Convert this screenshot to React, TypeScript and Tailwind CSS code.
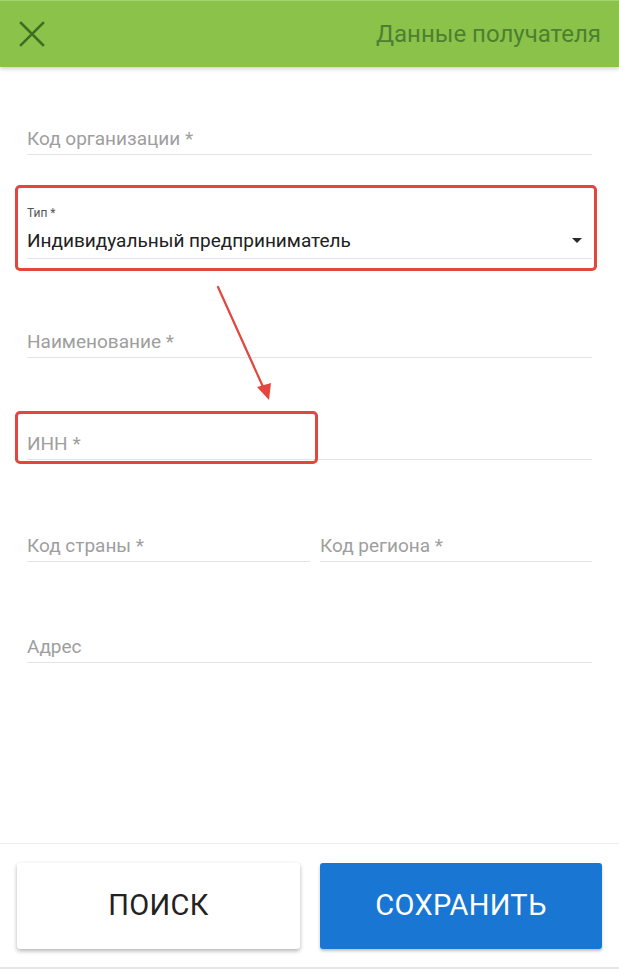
import type { ReactNode } from 'react'

const font = { fontFamily: 'Roboto, "Noto Sans", Arial, sans-serif' }

const Field = ({ label, className = '', children }: { label: string; className?: string; children?: ReactNode }) => (
  <div className={`relative ${className}`}>
    <div className="border-b border-[#e4e4e4] pb-[5px] text-[19px] leading-[21px] text-[#9e9e9e]">{label}</div>
    {children}
  </div>
)

const RedBox = ({ className }: { className: string }) => (
  <div className={`absolute pointer-events-none rounded-[5px] border-[3px] border-[#e2463d] ${className}`} />
)

export default function App() {
  return (
    <div className="w-[619px] h-[969px] bg-white flex flex-col overflow-hidden" style={font}>
      {/* Header */}
      <div className="h-[67px] shrink-0 bg-[#8bc34a] border-t border-[#a5d36f] flex items-center justify-between pl-[19px] pr-[18px] shadow-[0_2px_4px_rgba(0,0,0,0.18)] z-10">
        <svg viewBox="0 0 26 26" className="w-[26px] h-[26px]" fill="none" stroke="#3f6d22" strokeWidth="2.6" strokeLinecap="square">
          <path d="M2 2 L24 24 M24 2 L2 24" />
        </svg>
        <span className="text-[24px] text-[#4d7f30]">Данные получателя</span>
      </div>

      {/* Form */}
      <div className="relative flex-1 px-[27px]">
        <Field label="Код организации *" className="mt-[61px]" />

        <div className="relative mt-[51px]">
          <div className="text-[12px] leading-[14px] text-[#555]">Тип *</div>
          <div className="flex items-center justify-between border-b border-[#e4e4e4] mt-[10px] pb-[7px]">
            <span className="text-[19px] leading-[21px] text-[#212121]">Индивидуальный предприниматель</span>
            <svg viewBox="0 0 10 5" className="w-[10px] h-[5px] mr-[10px]">
              <path d="M0 0 H10 L5 5 Z" fill="#2a2a2a" />
            </svg>
          </div>
          <RedBox className="-left-[12px] -top-[21px] -right-[5px] -bottom-[12px]" />
        </div>

        <Field label="Наименование *" className="mt-[72px]" />

        <Field label="ИНН *" className="mt-[75px]">
          <RedBox className="-left-[12px] -top-[22px] w-[303px] -bottom-[4px]" />
        </Field>

        <div className="flex mt-[75px]">
          <Field label="Код страны *" className="w-[283px]" />
          <Field label="Код региона *" className="flex-1 ml-[8px] pl-[2px]" />
        </div>

        <Field label="Адрес" className="mt-[74px]" />

        {/* Annotation arrow */}
        <svg className="absolute left-[208px] top-[216px] w-[70px] h-[120px] pointer-events-none" viewBox="0 0 70 120">
          <path d="M10 4 L56 106" stroke="#e2463d" strokeWidth="2.2" strokeLinecap="round" />
          <path d="M61 117 L49 104 L63 100 Z" fill="#e2463d" />
        </svg>
      </div>

      {/* Footer */}
      <div className="h-[126px] shrink-0 border-t border-[#ececec] border-b-2 border-b-[#e6e6e6] flex gap-[20px] px-[17px] pt-[19px] pb-[18px]">
        <button className="w-[283px] h-[86px] bg-white rounded-[3px] shadow-[0_2px_4px_rgba(0,0,0,0.3)] text-[29px] text-[#222] tracking-[0.3px]">
          ПОИСК
        </button>
        <button className="flex-1 h-[86px] bg-[#1976d2] rounded-[3px] shadow-[0_2px_3px_rgba(0,0,0,0.25)] text-[29px] text-white tracking-[0.3px]">
          СОХРАНИТЬ
        </button>
      </div>
    </div>
  )
}
